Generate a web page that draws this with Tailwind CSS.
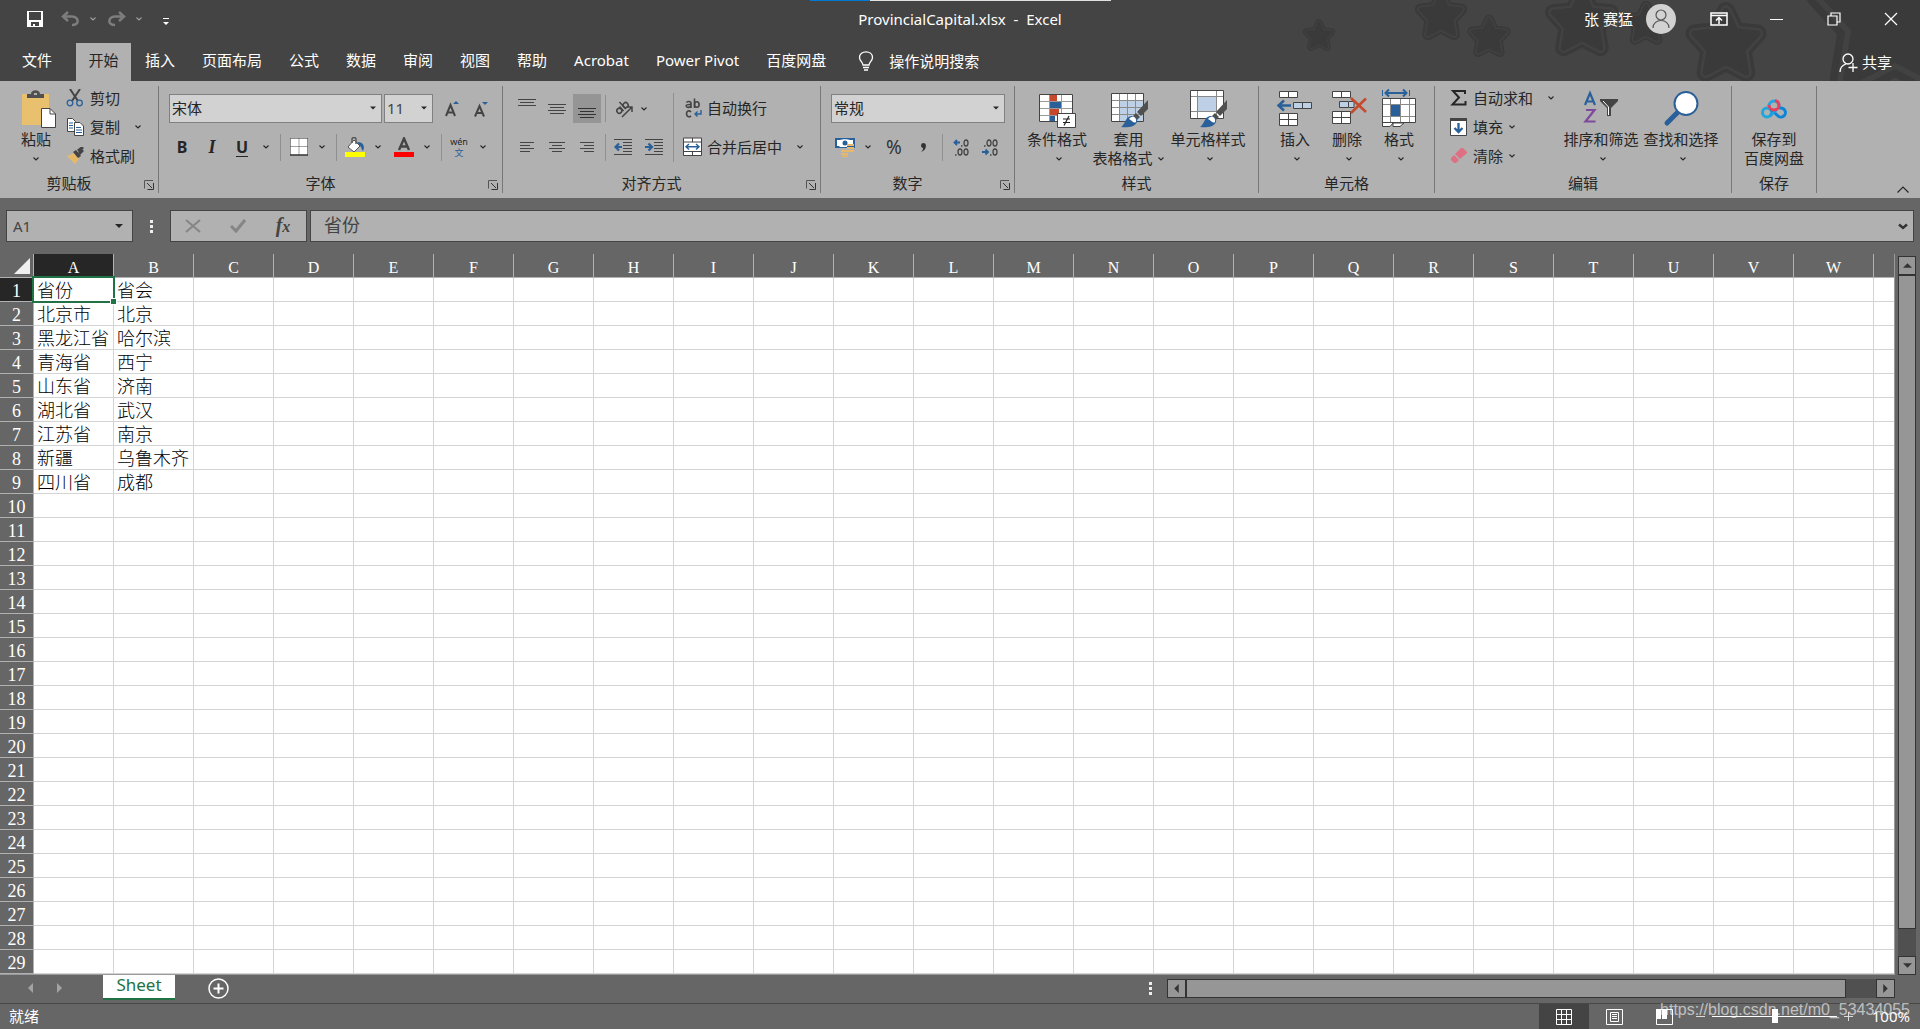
<!DOCTYPE html>
<html lang="zh-CN">
<head>
<meta charset="utf-8">
<title>ProvincialCapital.xlsx - Excel</title>
<script src="https://cdn.jsdelivr.net/npm/@tailwindcss/browser@4"></script>
</head>
<body class="flex min-h-screen flex-col overflow-hidden bg-[#666666] font-['Noto_Sans','Noto_Sans_CJK_SC',sans-serif] text-[15px] leading-5 text-[#262626]">

<svg class="hidden" xmlns="http://www.w3.org/2000/svg">
  <symbol id="chev" viewBox="0 0 8 6"><path d="M1.500 1.500L4 4L6.500 1.500" fill="none" stroke="currentColor" stroke-width="1.100"/></symbol>
  <symbol id="tri" viewBox="0 0 8 4"><path d="M0 0H8L4 4Z" fill="currentColor"/></symbol>
  <symbol id="launch" viewBox="0 0 10 10"><path d="M.5 8.500V.5H9" fill="none" stroke="#555"/><path d="M3 3L8 8M9.500 3V9.500H3.500" fill="none" stroke="#333"/></symbol>
  <symbol id="star" viewBox="-60 -60 120 120">
    <path d="M0 -44L13 -17L42 -14L22 8L27 38L0 24L-27 38L-22 8L-42 -14L-13 -17Z" fill="#3a3a3a" stroke="#3a3a3a" stroke-width="24" stroke-linejoin="round"/>
    <path d="M0 -44L13 -17L42 -14L22 8L27 38L0 24L-27 38L-22 8L-42 -14L-13 -17Z" fill="#3a3a3a" stroke="#424242" stroke-width="15" stroke-linejoin="round"/>
    <path d="M0 -44L13 -17L42 -14L22 8L27 38L0 24L-27 38L-22 8L-42 -14L-13 -17Z" fill="#3a3a3a" stroke="#3a3a3a" stroke-width="8" stroke-linejoin="round"/>
  </symbol>
  <symbol id="brush" viewBox="0 0 28 28">
    <path d="M27 0V9L20 16L16 12Z" fill="#505050"/><path d="M15 13L19 17L16 20L12 16Z" fill="#505050"/>
    <path d="M0 27C4 25 4 17 10 16C14 16 17 19 16 22C14 27 6 28 0 27Z" fill="#2a6099"/>
    <path d="M8 19C11 15 16 17 15 22C12 24 11 20 8 19Z" fill="#fff"/>
  </symbol>
</svg>

<header class="relative overflow-hidden bg-[#444444] text-white">
  <svg class="absolute top-0 right-0 h-[81px] w-[640px]" viewBox="0 0 640 81" aria-hidden="true">
    <use href="#star" x="21" y="18" width="36" height="36"/>
    <use href="#star" x="132" y="-13" width="58" height="58"/>
    <use href="#star" x="185" y="13" width="48" height="48"/>
    <use href="#star" x="261" y="-19" width="82" height="82"/>
    <use href="#star" x="341" y="-1" width="50" height="50"/>
    <use href="#star" x="401" y="-1" width="90" height="90"/>
    <use href="#star" x="515" y="-85" width="200" height="200"/>
  </svg>
  <div class="absolute inset-x-0 top-0 flex h-px justify-center"><span class="w-[60px] bg-[#0078d4]"></span><span class="w-[241px] bg-[#e1e1e1]"></span></div>

  <div class="relative flex h-[43px] items-start">
    <div class="flex h-[38px] flex-1 items-center text-[#a0a0a0]">
      <button class="ml-[23px] flex w-6 justify-center" aria-label="保存"><svg class="size-4" viewBox="0 0 16 16"><path d="M0 0H16V16H0Z" fill="#fff"/><path d="M2 1H14V9H2Z" fill="#444"/><path d="M4 11H12V15H4Z" fill="#444"/><path d="M6 13H8V16H6Z" fill="#fff"/></svg></button>
      <button class="ml-3.5 flex w-[18px] justify-center" aria-label="撤消"><svg class="h-4 w-[18px]" viewBox="0 0 18 16" fill="none" stroke="#7d7d7d" stroke-width="2.500"><path d="M7 1L2 5.500L7 10M2 5.500H11C18 6 19 14 11 14"/></svg></button>
      <button class="flex w-7 justify-center" aria-label="撤消选项"><svg class="h-1.5 w-2"><use href="#chev"/></svg></button>
      <button class="flex w-5 justify-center" aria-label="恢复"><svg class="h-4 w-[18px]" viewBox="0 0 18 16" fill="none" stroke="#7d7d7d" stroke-width="2.500"><path d="M11 1L16 5.500L11 10M16 5.500H7C0 6 -1 14 7 14"/></svg></button>
      <button class="flex w-6 justify-center" aria-label="恢复选项"><svg class="h-1.5 w-2"><use href="#chev"/></svg></button>
      <button class="ml-[3px] flex w-6 justify-center pt-1.5" aria-label="自定义快速访问工具栏"><svg class="h-2 w-1.5" viewBox="0 0 6 8"><path d="M0 .5H6" stroke="#fff"/><path d="M0 4H6L3 7Z" fill="#fff"/></svg></button>
    </div>
    <h1 class="pt-[9px] whitespace-pre">ProvincialCapital.xlsx  -  Excel</h1>
    <div class="flex h-[38px] flex-1 items-center justify-end">
      <span>张 赛猛</span>
      <button class="mr-[14px] ml-[13px] flex size-[30px] items-center justify-center rounded-full bg-[#d2d2d2]" aria-label="帐户"><svg class="size-5" viewBox="0 0 20 20" fill="none" stroke="#555" stroke-width="1.200"><circle cx="10" cy="6" r="5"/><path d="M2 19C2 9 18 9 18 19"/></svg></button>
      <button class="flex w-[58px] justify-center" aria-label="功能区显示选项"><svg class="h-[14px] w-[18px]" viewBox="0 0 18 14" fill="none" stroke="#fff"><path d="M1 1H17V13H1ZM1 3.500H17" stroke-width="1.500"/><path d="M9 12V6M6 8.500L9 5.500L12 8.500" stroke-width="1.500"/></svg></button>
      <button class="flex w-[57px] justify-center" aria-label="最小化"><svg class="h-[14px] w-[14px]" viewBox="0 0 14 14"><path d="M0 7.500H13" stroke="#fff"/></svg></button>
      <button class="flex w-[57px] justify-center" aria-label="向下还原"><svg class="size-[14px]" viewBox="0 0 14 14" fill="none" stroke="#fff" stroke-width="1.200"><path d="M1 4H10V13H1ZM4 4V1H13V10H10"/></svg></button>
      <button class="flex w-[58px] justify-center" aria-label="关闭"><svg class="size-[14px]" viewBox="0 0 14 14"><path d="M1 1L13 13M13 1L1 13" stroke="#fff" stroke-width="1.200"/></svg></button>
    </div>
  </div>

  <div class="relative flex h-[38px]">
    <nav class="flex items-stretch" aria-label="功能区选项卡">
      <button class="w-[76px] pr-0.5 pb-1">文件</button>
      <button class="w-[55px] bg-[#b1b1b1] pb-1 text-[#262626]">开始</button>
      <div class="flex gap-[27px] pb-1 pl-[14px]">
        <button>插入</button><button>页面布局</button><button>公式</button><button>数据</button><button>审阅</button><button>视图</button><button>帮助</button><button>Acrobat</button><button>Power Pivot</button><button>百度网盘</button>
      </div>
    </nav>
    <button class="ml-8 flex items-center gap-[15px] pb-0.5"><svg class="h-5 w-4" viewBox="0 0 16 20" fill="none" stroke="#fff" stroke-width="1.300"><path d="M5 14C5 11 1.500 10 1.500 6.500C1.500 -1 14.500 -1 14.500 6.500C14.500 10 11 11 11 14Z"/><path d="M5 16.500H11M6 19H10" stroke-width="1.600"/></svg>操作说明搜索</button>
    <button class="mr-[28px] ml-auto flex items-center gap-1"><svg class="size-[19px]" viewBox="0 0 19 19" fill="none" stroke="#fff" stroke-width="1.300"><circle cx="9" cy="6" r="5"/><path d="M1 19C1 15 4 12 7 11M14 10V19M9.500 14.500H18.500"/></svg>共享</button>
  </div>
</header>

<main class="flex flex-1 flex-col">
<section class="flex h-[117px] bg-[#b1b1b1] py-[5px] text-[15px]" aria-label="开始">

  <div class="flex w-[159px] shrink-0 flex-col border-r border-[#777]">
    <div class="flex h-[90px]">
      <button class="ml-[14px] flex w-11 flex-col items-center leading-[19px]">
        <span class="flex h-11 items-start pt-1"><svg class="h-[38px] w-10" viewBox="0 0 40 38"><path d="M6 4H33V35H6Z" fill="#e8c06e"/><path d="M11 8V4H15C15 -1 24 -1 24 4H28V8Z" fill="#505050"/><path d="M18 3H21V5H18Z" fill="#b1b1b1"/><path d="M25.500 18.500H34L39.500 24V37.500H25.500Z" fill="#fff" stroke="#444"/><path d="M34 18.500V24H39.500" fill="none" stroke="#444"/></svg></span>
        粘贴
        <span class="flex h-[19px] items-center"><svg class="h-1.5 w-2"><use href="#chev"/></svg></span>
      </button>
      <div class="ml-2 flex flex-col items-start gap-[5px]">
        <button class="flex h-6 items-center"><svg class="mr-1.5 h-[18px] w-[18px]" viewBox="0 0 18 18" fill="none"><path d="M4 0L12 12M14 0L6 12" stroke="#444" stroke-width="2"/><circle cx="4" cy="14" r="2.800" stroke="#2a6099" stroke-width="1.300"/><circle cx="13.500" cy="14" r="2.800" stroke="#2a6099" stroke-width="1.300"/></svg>剪切</button>
        <div class="flex h-6 items-center"><button class="flex items-center"><svg class="mr-1.5 h-[18px] w-[18px]" viewBox="0 0 18 18" fill="#fff" stroke="#444"><path d="M1.500 .5H6.500L9.500 3.500V13.500H1.500Z"/><path d="M3 5H7M3 7.500H7M3 10H7" stroke="#2a6099"/><path d="M8.500 4.500H14L17.500 8V17.500H8.500Z"/><path d="M10 9.500H15M10 12H16M10 14.500H16" stroke="#2a6099"/></svg>复制</button>
          <button class="ml-3 flex w-3 justify-center" aria-label="复制选项"><svg class="h-1.5 w-2"><use href="#chev"/></svg></button></div>
        <button class="flex h-6 items-center"><svg class="mr-1.5 h-[18px] w-[18px]" viewBox="0 0 18 18"><path d="M1 9L8 6L13 12L9 17Z" fill="#e8b86a"/><path d="M7 5L10 3L15 9L12 11Z" fill="#444"/><path d="M12 4L17 0M13 7L17 3" stroke="#444" stroke-width="3"/></svg>格式刷</button>
      </div>
    </div>
    <div class="flex flex-1 items-center pt-0.5"><span class="flex-1 text-center">剪贴板</span><button class="w-5 pt-1" aria-label="剪贴板设置"><svg class="ml-1.5 size-[10px]"><use href="#launch"/></svg></button></div>
  </div>

  <div class="flex w-[344px] shrink-0 flex-col border-r border-[#777]">
    <div class="flex h-[90px] flex-col pt-2">
      <div class="flex h-[29px] items-center pl-[10px]">
        <div class="relative"><select aria-label="字体" class="h-[29px] w-[213px] appearance-none border border-[#808080] bg-[#d2d2d2] pb-0.5 pl-0.5 outline-none"><option>宋体</option></select><svg class="pointer-events-none absolute top-3 right-1.5 h-1 w-1.5"><use href="#tri"/></svg></div>
        <div class="relative ml-0.5"><select aria-label="字号" class="h-[29px] w-[49px] appearance-none border border-[#808080] bg-[#d2d2d2] pb-0.5 pl-0.5 text-[#444] outline-none"><option>11</option></select><svg class="pointer-events-none absolute top-3 right-1.5 h-1 w-1.5"><use href="#tri"/></svg></div>
        <button class="ml-1 flex w-[29px] items-center justify-center" aria-label="增大字号"><svg class="h-4 w-[14px]" viewBox="0 0 14 16"><path d="M1 15L5.500 4L10 15M2.500 11.500H8.500" fill="none" stroke="#444" stroke-width="2"/><path d="M8 3H14L11 0Z" fill="#2a6099"/></svg></button>
        <button class="flex w-[29px] items-center justify-center" aria-label="减小字号"><svg class="h-4 w-[14px]" viewBox="0 0 14 16"><path d="M1 15.500L5.500 5L10 15.500M2.500 12H8.500" fill="none" stroke="#444" stroke-width="2"/><path d="M8 1H14L11 4Z" fill="#2a6099"/></svg></button>
      </div>
      <div class="mt-[10px] flex h-7 items-center pl-2">
        <button class="w-[30px] text-[16px] font-bold">B</button>
        <button class="w-[30px] font-['Liberation_Serif',serif] text-[18px] font-bold italic">I</button>
        <button class="w-[30px] text-[16px] font-bold underline underline-offset-3">U</button>
        <button class="flex w-[18px] justify-center" aria-label="下划线选项"><svg class="h-1.5 w-2"><use href="#chev"/></svg></button>
        <span class="flex w-[11px] justify-center"><i class="h-[27px] w-px bg-[#8f8f8f]"></i></span>
        <button class="flex w-[26px] justify-center" aria-label="边框"><svg class="size-[18px]" viewBox="0 0 18 18"><path d="M.5 .5H17.500V17H.5Z" fill="#fff"/><path d="M.5 .5H17.500M.5 8.500H17.500M.5 .5V17M9 .5V17M17.500 .5V17" stroke="#444" stroke-dasharray="1 1" fill="none"/><path d="M0 17H18" stroke="#333" stroke-width="1.500"/></svg></button>
        <button class="flex w-5 justify-center" aria-label="边框选项"><svg class="h-1.5 w-2"><use href="#chev"/></svg></button>
        <span class="flex w-[9px] justify-center"><i class="h-[27px] w-px bg-[#8f8f8f]"></i></span>
        <button class="flex w-7 justify-center" aria-label="填充颜色"><svg class="h-5 w-5" viewBox="0 0 20 20"><path d="M12 5C19 5 20 10 18 14C16 12 17 10 14 8Z" fill="#2a6099"/><path d="M9 3L15 9L9 15L3 10Z" fill="#fff" stroke="#555"/><path d="M7 6V2C7 0 11 0 11 2V7" fill="none" stroke="#555" stroke-width="1.400"/><path d="M0 15H20V20H0Z" fill="#ff0"/></svg></button>
        <button class="flex w-[18px] justify-center" aria-label="填充颜色选项"><svg class="h-1.5 w-2"><use href="#chev"/></svg></button>
        <button class="flex w-[34px] justify-center" aria-label="字体颜色"><svg class="h-5 w-5" viewBox="0 0 20 20"><path d="M5 13L10 1.500L15 13M7 9.500H13" fill="none" stroke="#444" stroke-width="2.400"/><path d="M0 15H20V20H0Z" fill="#f00"/></svg></button>
        <button class="flex w-3 justify-center" aria-label="字体颜色选项"><svg class="h-1.5 w-2"><use href="#chev"/></svg></button>
        <span class="flex w-4 justify-center"><i class="h-[27px] w-px bg-[#8f8f8f]"></i></span>
        <button class="flex w-5 flex-col items-center text-[9px] leading-[11px]"><span>wén</span><span class="text-[#2a6099]">文</span></button>
        <button class="flex w-7 justify-center" aria-label="拼音选项"><svg class="h-1.5 w-2"><use href="#chev"/></svg></button>
      </div>
    </div>
    <div class="flex flex-1 items-center pt-0.5"><span class="flex-1 text-center">字体</span><button class="w-5 pt-1" aria-label="字体设置"><svg class="ml-1.5 size-[10px]"><use href="#launch"/></svg></button></div>
  </div>

  <div class="flex w-[318px] shrink-0 flex-col border-r border-[#777]">
    <div class="flex h-[90px] items-start">
      <div class="w-[170px] pt-2 pl-[10px]">
        <div class="flex h-[29px] items-center gap-0.5">
          <button class="flex h-[29px] w-7 justify-center pt-1" aria-label="顶端对齐"><svg class="h-3 w-[18px]" viewBox="0 0 18 12"><path d="M0 1.500H18M2 4.500H16M0 7.500H18" stroke="#444"/></svg></button>
          <button class="flex h-[29px] w-7 items-center justify-center" aria-label="垂直居中"><svg class="h-3 w-[18px]" viewBox="0 0 18 12"><path d="M0 1.500H18M2 4.500H16M0 7.500H18M2 10.500H16" stroke="#444"/></svg></button>
          <button class="flex h-[29px] w-7 items-end justify-center bg-[#959595] pb-1" aria-label="底端对齐"><svg class="h-3 w-[18px]" viewBox="0 0 18 12"><path d="M0 1.500H18M2 4.500H16M0 7.500H18M2 10.500H16" stroke="#333"/></svg></button>
          <span class="flex w-1 justify-center"><i class="h-[27px] w-px bg-[#8f8f8f]"></i></span>
          <button class="flex w-7 justify-center" aria-label="方向"><svg class="size-[19px]" viewBox="0 0 19 19" fill="none" stroke="#444" stroke-width="1.500"><g transform="rotate(-42 8 8)"><circle cx="3.500" cy="9" r="2.500"/><path d="M6.500 6V12M9.500 2.500V12"/><circle cx="12" cy="9" r="2.500"/></g><path d="M8 18L17.500 8.500M13 8H18V13"/></svg></button>
          <button class="flex w-2.5 justify-center" aria-label="方向选项"><svg class="h-1.5 w-2"><use href="#chev"/></svg></button>
        </div>
        <div class="mt-[10px] flex h-7 items-center gap-0.5">
          <button class="flex w-7 justify-center" aria-label="左对齐"><svg class="h-3 w-[14px]" viewBox="0 0 14 12"><path d="M0 1.500H14M0 4.500H10M0 7.500H14M0 10.500H10" stroke="#444"/></svg></button>
          <button class="flex w-7 justify-center" aria-label="居中"><svg class="h-3 w-4" viewBox="0 0 16 12"><path d="M0 1.500H16M3 4.500H13M0 7.500H16M3 10.500H13" stroke="#444"/></svg></button>
          <button class="flex w-7 justify-center" aria-label="右对齐"><svg class="h-3 w-[14px]" viewBox="0 0 14 12"><path d="M0 1.500H14M4 4.500H14M0 7.500H14M4 10.500H14" stroke="#444"/></svg></button>
          <span class="flex w-1 justify-center"><i class="h-[27px] w-px bg-[#8f8f8f]"></i></span>
          <button class="flex w-7 justify-center" aria-label="减少缩进"><svg class="h-4 w-[18px]" viewBox="0 0 18 16"><path d="M0 .5H18M9 3.500H18M9 6.500H18M9 9.500H18M9 12.500H18M0 15.500H18" stroke="#444"/><path d="M8 8H2M5 4.500L1.500 8L5 11.500" fill="none" stroke="#2a6099" stroke-width="2.200"/></svg></button>
          <button class="flex w-[30px] justify-center" aria-label="增加缩进"><svg class="h-4 w-[18px]" viewBox="0 0 18 16"><path d="M0 .5H18M9 3.500H18M9 6.500H18M9 9.500H18M9 12.500H18M0 15.500H18" stroke="#444"/><path d="M0 8H6M3.500 4.500L7 8L3.500 11.500" fill="none" stroke="#2a6099" stroke-width="2.200"/></svg></button>
        </div>
      </div>
      <i class="mt-[7px] h-[69px] w-px bg-[#8f8f8f]"></i>
      <div class="pt-2 pl-[9px]">
        <button class="flex h-[29px] items-center pb-0.5"><svg class="mr-1 h-5 w-5" viewBox="0 0 20 20" fill="none" stroke="#444" stroke-width="1.600"><path d="M3.500 4.500C4 3 8 3 8 5V10M8 6.500C4 6.200 2.800 7.200 3.200 8.200C4 10 7 9.500 8 8"/><path d="M11.500 .5V10"/><ellipse cx="13.800" cy="6.500" rx="2.300" ry="2.800"/><path d="M8 14C6 12 3.500 13 3.500 15.800C3.500 18.500 6 19.500 8 18"/><path d="M18 12V16H12M14.500 13.500L12 16L14.500 18.500" stroke="#2a6099" stroke-width="1.400"/></svg>自动换行</button>
        <div class="mt-[10px] flex h-7 items-center"><button class="flex items-center"><svg class="mr-1 h-5 w-5" viewBox="0 0 20 20"><path d="M.5 1H18.500V18.500H.5Z" fill="#fff" stroke="#444"/><path d="M.5 5H18.500M.5 14.500H18.500M9.500 1V5M9.500 14.500V18.500" stroke="#444"/><path d="M3 9.700H16M6 7L3 9.700L6 12.500M13 7L16 9.700L13 12.500" fill="none" stroke="#2a6099" stroke-width="1.400"/></svg>合并后居中</button>
          <button class="ml-2 flex w-5 justify-center" aria-label="合并选项"><svg class="h-1.5 w-2"><use href="#chev"/></svg></button></div>
      </div>
    </div>
    <div class="flex flex-1 items-center pt-0.5"><span class="flex-1 text-center">对齐方式</span><button class="w-5 pt-1" aria-label="对齐设置"><svg class="ml-1.5 size-[10px]"><use href="#launch"/></svg></button></div>
  </div>

  <div class="flex w-[194px] shrink-0 flex-col border-r border-[#777]">
    <div class="h-[90px] pt-2 pl-[10px]">
      <div class="relative w-[174px]"><select aria-label="数字格式" class="h-[29px] w-[174px] appearance-none border border-[#808080] bg-[#d2d2d2] pb-0.5 pl-0.5 outline-none"><option>常规</option></select><svg class="pointer-events-none absolute top-3 right-1.5 h-1 w-1.5"><use href="#tri"/></svg></div>
      <div class="mt-[10px] flex h-7 items-center">
        <button class="flex w-7 justify-center" aria-label="会计数字格式"><svg class="size-5" viewBox="0 0 20 20"><path d="M0 1H20V11H0Z" fill="#2a6099"/><path d="M2 3H5C7 2 13 2 15 3H18V7H12V10H5L4 9H2Z" fill="#fff"/><circle cx="10" cy="6" r="2.500" fill="#2a6099"/><path d="M12 8H19M12 11H19M13 14H19M6 14H13M6 17H13M7 19.500H13" stroke="#e8b86a" stroke-width="2"/></svg></button>
        <button class="flex w-[18px] justify-center" aria-label="会计格式选项"><svg class="h-1.5 w-2"><use href="#chev"/></svg></button>
        <button class="w-[34px] text-[19px] text-[#333]">%</button>
        <button class="flex w-6 justify-center" aria-label="千位分隔样式"><svg class="h-[9px] w-1.5" viewBox="0 0 6 9"><path d="M1 9C3 7 3 6 3 5A2.500 2.500 0 1 1 6 2.500C6 6 4 8 1 9Z" fill="#333"/></svg></button>
        <span class="flex w-[14px] justify-center"><i class="h-[27px] w-px bg-[#8f8f8f]"></i></span>
        <button class="flex w-6 justify-center" aria-label="增加小数位数"><svg class="h-[18px] w-4" viewBox="0 0 16 18" fill="none" stroke="#444" stroke-width="1.300"><path d="M8 8H9.500M2 17H3.500"/><ellipse cx="13" cy="5" rx="2" ry="3"/><ellipse cx="7" cy="14" rx="2" ry="3"/><ellipse cx="13" cy="14" rx="2" ry="3"/><path d="M7 4.500H1.500M4 2L1.500 4.500L4 7" stroke="#2a6099" stroke-width="1.800"/></svg></button>
        <button class="flex w-[34px] justify-center" aria-label="减少小数位数"><svg class="h-[18px] w-4" viewBox="0 0 16 18" fill="none" stroke="#444" stroke-width="1.300"><path d="M2 8H3.500M8 17H9.500"/><ellipse cx="7" cy="5" rx="2" ry="3"/><ellipse cx="13" cy="5" rx="2" ry="3"/><ellipse cx="13" cy="14" rx="2" ry="3"/><path d="M0 14H5.500M3.500 11.500L6 14L3.500 16.500" stroke="#2a6099" stroke-width="1.800"/></svg></button>
      </div>
    </div>
    <div class="flex flex-1 items-center pt-0.5"><span class="flex-1 text-center">数字</span><button class="w-5 pt-1" aria-label="数字设置"><svg class="ml-1.5 size-[10px]"><use href="#launch"/></svg></button></div>
  </div>

  <div class="flex w-[244px] shrink-0 flex-col border-r border-[#777]">
    <div class="flex h-[90px] pl-2 leading-[19px]">
      <button class="flex w-[68px] flex-col items-center">
        <span class="flex h-11 items-center"><svg class="size-10" viewBox="0 0 40 40"><path d="M2.500 6.500H35.500V33.500H2.500Z" fill="#fff"/><path d="M13 7H20V13H13Z" fill="#c5492a"/><path d="M13 14H24V20H13Z" fill="#2a6099"/><path d="M13 21H22V27H13Z" fill="#c5492a"/><path d="M13 28H18V33H13Z" fill="#2a6099"/><path d="M2.500 13.500H35M2.500 20.500H35M2.500 27.500H35M12.500 6V33M24.500 6V33" stroke="#999"/><path d="M2.500 6.500H35.500V33.500H2.500Z" fill="none" stroke="#444"/><path d="M20.500 25.500H38.500V39.500H20.500Z" fill="#fff" stroke="#444"/><path d="M26 31H33M26 34.500H33M32 28L27 37.500" stroke="#222" stroke-width="1.200"/></svg></span>
        条件格式
        <span class="flex h-[19px] items-center pl-1"><svg class="h-1.5 w-2"><use href="#chev"/></svg></span>
      </button>
      <button class="flex w-[75px] flex-col items-center">
        <span class="flex h-11 items-center"><svg class="size-10" viewBox="0 0 40 40"><path d="M2.500 5.500H34.500V33.500H2.500Z" fill="#fff"/><path d="M11 13H34V33H11Z" fill="#bdd0e6"/><path d="M2.500 12.500H34M2.500 19.500H34M2.500 26.500H34M10.500 6V33M18.500 6V33M26.500 6V33" stroke="#8a8a8a"/><path d="M2.500 5.500H34.500V33.500H2.500Z" fill="none" stroke="#444"/><use href="#brush" x="12" y="12" width="28" height="28"/></svg></span>
        套用
        <span class="flex items-center gap-1 whitespace-nowrap">表格格式<svg class="h-1.5 w-2"><use href="#chev"/></svg></span>
      </button>
      <button class="flex w-[84px] flex-col items-center">
        <span class="flex h-11 items-center"><svg class="size-10" viewBox="0 0 40 40"><path d="M2.500 2.500H35.500V30.500H2.500Z" fill="#fff"/><path d="M2.500 8.500H35M2.500 23.500H35M9.500 3V30M28.500 3V30" stroke="#8a8a8a"/><path d="M10 9H28V23H10Z" fill="#bdd0e6"/><path d="M2.500 2.500H35.500V30.500H2.500Z" fill="none" stroke="#444"/><use href="#brush" x="12" y="12" width="28" height="28"/></svg></span>
        单元格样式
        <span class="flex h-[19px] items-center pl-1"><svg class="h-1.5 w-2"><use href="#chev"/></svg></span>
      </button>
    </div>
    <div class="flex flex-1 items-center justify-center pt-0.5">样式</div>
  </div>

  <div class="flex w-[176px] shrink-0 flex-col border-r border-[#777]">
    <div class="flex h-[90px] pl-3 leading-[19px]">
      <button class="flex w-12 flex-col items-center">
        <span class="flex h-11 items-center"><svg class="h-10 w-10" viewBox="0 0 40 40" fill="#fff" stroke="#444"><path d="M4.500 3.500H22.500V9.500H4.500ZM13.500 3.500V9.500"/><path d="M18.500 14.500H36.500V20.500H18.500ZM27.500 14.500V20.500" fill="#bdd0e6"/><path d="M4.500 25.500H22.500V37.500H4.500ZM13.500 25.500V37.500M4.500 31.500H22.500"/><path d="M16 17.500H4M9 12.500L3.500 17.500L9 22.500" fill="none" stroke="#2a6099" stroke-width="2.500"/></svg></span>
        插入
        <span class="flex h-[19px] items-center pl-1"><svg class="h-1.5 w-2"><use href="#chev"/></svg></span>
      </button>
      <button class="flex w-[56px] flex-col items-center">
        <span class="flex h-11 items-center pl-1"><svg class="h-10 w-10" viewBox="0 0 40 40" fill="#fff" stroke="#444"><path d="M3.500 3.500H21.500V9.500H3.500ZM12.500 3.500V9.500"/><path d="M10.500 13.500H19.500V19.500H10.500Z" fill="#bdd0e6"/><path d="M20 13.500H25V19.500H20" fill="#bdd0e6"/><path d="M3.500 23.500H21.500V35.500H3.500ZM12.500 23.500V35.500M3.500 29.500H21.500"/><path d="M22 10L37 24M37 10.500L22 25" fill="none" stroke="#c5492a" stroke-width="2.500"/></svg></span>
        删除
        <span class="flex h-[19px] items-center pl-1"><svg class="h-1.5 w-2"><use href="#chev"/></svg></span>
      </button>
      <button class="flex w-12 flex-col items-center">
        <span class="flex h-11 items-center"><svg class="h-10 w-10" viewBox="0 0 40 40"><path d="M3.500 2V8M30.500 2V8" stroke="#2a6099"/><path d="M6 5H28M10 1.500L6.500 5L10 8.500M24 1.500L27.500 5L24 8.500" fill="none" stroke="#2a6099" stroke-width="2"/><path d="M3.500 10.500H36.500V34.500H3.500Z" fill="#fff"/><path d="M3.500 16.500H36M3.500 28.500H36M11.500 11V34M21.500 11V34M30.500 11V34" stroke="#8a8a8a"/><path d="M12 17H21V28H12Z" fill="#2a6099"/><path d="M3.500 34V38.500H11L14 35H25L21 38.500H14L14 35" fill="#fff" stroke="#444"/><path d="M3.500 10.500H36.500V34.500H3.500Z" fill="none" stroke="#444"/></svg></span>
        格式
        <span class="flex h-[19px] items-center pl-1"><svg class="h-1.5 w-2"><use href="#chev"/></svg></span>
      </button>
    </div>
    <div class="flex flex-1 items-center justify-center pt-0.5">单元格</div>
  </div>

  <div class="flex w-[297px] shrink-0 flex-col border-r border-[#777]">
    <div class="flex h-[90px] pl-[13px] leading-[19px]">
      <div class="flex w-[113px] flex-col gap-[5px]">
        <div class="flex h-6 items-center"><button class="flex items-center gap-[5px]"><svg class="size-5" viewBox="0 0 20 20"><path d="M17 6V3H5L11 9.500L4.500 16.500H17.500V13" fill="none" stroke="#262626" stroke-width="2"/></svg>自动求和</button><button class="ml-3 flex w-3 justify-center" aria-label="求和选项"><svg class="h-1.5 w-2"><use href="#chev"/></svg></button></div>
        <button class="flex h-6 items-center gap-[5px]"><svg class="size-5" viewBox="0 0 20 20"><path d="M2.500 2H18.500V18.500H2.500Z" fill="#fff" stroke="#444"/><path d="M2 1H19V4H2Z" fill="#444"/><path d="M10.500 6V15M6.500 11L10.500 15L14.500 11" fill="none" stroke="#2a6099" stroke-width="2.300"/></svg>填充<svg class="h-1.5 w-2"><use href="#chev"/></svg></button>
        <button class="flex h-6 items-center gap-[5px]"><svg class="size-5" viewBox="0 0 20 20"><path d="M13 2H15L19 6V7L12 13L7 8Z" fill="#dd7083"/><path d="M6 9L11 14L8 17H6L3 14V12Z" fill="#dd7083"/></svg>清除<svg class="h-1.5 w-2"><use href="#chev"/></svg></button>
      </div>
      <button class="flex w-20 flex-col items-center">
        <span class="flex h-11 items-center"><svg class="h-10 w-10" viewBox="0 0 40 40"><path d="M4 17L9 5L14 17M6 13.500H12" fill="none" stroke="#2a6099" stroke-width="2.200"/><path d="M5 22H13.500L4.500 33.500H14.500" fill="none" stroke="#7e4a9e" stroke-width="2.200"/><path d="M19 11H37V13L30 20V28H26V20L19 13Z" fill="#444"/><path d="M22 13L27.500 19V27" stroke="#fff" fill="none"/></svg></span>
        排序和筛选
        <span class="flex h-[19px] items-center pl-1"><svg class="h-1.5 w-2"><use href="#chev"/></svg></span>
      </button>
      <button class="flex w-20 flex-col items-center">
        <span class="flex h-11 items-center"><svg class="h-10 w-10" viewBox="0 0 40 40"><path d="M17 24L6 35" stroke="#2a6099" stroke-width="5" stroke-linecap="round"/><circle cx="25" cy="15.500" r="11.500" fill="#fff" stroke="#2a6099" stroke-width="2"/></svg></span>
        查找和选择
        <span class="flex h-[19px] items-center pl-1"><svg class="h-1.5 w-2"><use href="#chev"/></svg></span>
      </button>
    </div>
    <div class="flex flex-1 items-center justify-center pt-0.5">编辑</div>
  </div>

  <div class="flex w-[85px] shrink-0 flex-col border-r border-[#777]">
    <button class="flex h-[90px] flex-col items-center leading-[19px]">
      <span class="flex h-11 items-center"><svg class="h-[21px] w-[26px]" viewBox="0 0 26 21" fill="none" stroke-width="3"><circle cx="6" cy="14.500" r="4.500" stroke="#1fa8dc"/><path d="M18 10.500A4.500 4.500 0 1 1 16.500 17.500L9.500 11" stroke="#0a86d8"/><path d="M8 8A5 5 0 1 1 18 8" stroke="#22a5e0"/><path d="M9 18L16 11" stroke="#1f9fe0"/><path d="M8 7A5 5 0 1 0 18 7A5 5 0 0 0 14 2.500" stroke="#e5405e"/></svg></span>
      <span>保存到</span><span>百度网盘</span>
    </button>
    <div class="flex flex-1 items-center justify-center pt-0.5">保存</div>
  </div>
  <div class="flex flex-1 items-end justify-end pr-[11px]"><button aria-label="折叠功能区"><svg class="h-[7px] w-3" viewBox="0 0 12 7"><path d="M.5 6.500L6 1L11.500 6.500" fill="none" stroke="#262626" stroke-width="1.200"/></svg></button></div>
</section>

<section class="flex py-3 pr-1.5 pl-1.5" aria-label="编辑栏">
  <div class="flex h-8 w-[127px] items-center border border-[#444] bg-[#b1b1b1]">
    <input aria-label="名称框" value="A1" class="w-full min-w-0 bg-transparent pl-1.5 text-[#444] outline-none"><button class="flex w-[26px] shrink-0 justify-center" aria-label="名称列表"><svg class="h-1 w-2"><use href="#tri"/></svg></button>
  </div>
  <div class="flex w-[37px] flex-col items-center justify-center gap-0.5"><i class="size-[3px] bg-[#eee]"></i><i class="size-[3px] bg-[#eee]"></i><i class="size-[3px] bg-[#eee]"></i></div>
  <div class="flex h-8 w-[137px] items-center border border-[#444] bg-[#b1b1b1]">
    <button class="flex w-[44px] justify-center" aria-label="取消"><svg class="h-[14px] w-4" viewBox="0 0 16 14"><path d="M1 1L15 13M15 1L1 13" stroke="#858585" stroke-width="2"/></svg></button>
    <button class="flex w-[46px] justify-center" aria-label="输入"><svg class="h-[14px] w-4" viewBox="0 0 16 14"><path d="M1 7L6 12L15 1" fill="none" stroke="#858585" stroke-width="3"/></svg></button>
    <button class="w-[44px] font-['Liberation_Serif',serif] text-[20px] font-bold text-[#444] italic">f<span class="text-[16px]">x</span></button>
  </div>
  <div class="ml-[3px] flex h-8 flex-1 items-center border border-[#444] bg-[#b1b1b1]">
    <input aria-label="编辑栏内容" value="省份" class="h-[30px] min-w-0 flex-1 bg-transparent pb-1 pl-[13px] text-[18px] text-[#444] outline-none"><button class="flex w-5 justify-center" aria-label="展开编辑栏"><svg class="h-[7px] w-[10px]" viewBox="0 0 10 7"><path d="M1 1.500L5 5L9 1.500" fill="none" stroke="#333" stroke-width="2.400"/></svg></button>
  </div>
</section>

<section class="flex" aria-label="工作表">
  <div class="min-w-0 flex-1 overflow-hidden border-r border-b border-[#9a9a9a]">
    <table class="w-full table-fixed border-separate border-spacing-0">
      <thead><tr id="columns"><th class="h-6 w-[34px] border-r border-b border-[#b1b1b1] p-0"><svg class="ml-[14px] size-4" viewBox="0 0 16 16"><path d="M16 0V16H0Z" fill="#f0f0f0"/></svg></th></tr></thead>
      <tbody id="rows" class="bg-white"></tbody>
    </table>
  </div>
  <div class="flex w-[25px] flex-col pt-0.5 pr-1 pl-[3px]">
    <button class="flex h-[19px] items-center justify-center border border-[#333] bg-[#969696] text-[#333]" aria-label="向上滚动"><svg class="h-[5px] w-[9px]" viewBox="0 0 8 4"><path d="M0 4H8L4 0Z" fill="currentColor"/></svg></button>
    <div class="flex flex-1 flex-col bg-[#505050]"><div class="h-[96%] border border-[#333] bg-[#969696]"></div></div>
    <button class="flex h-[19px] items-center justify-center border border-[#333] bg-[#969696] text-[#333]" aria-label="向下滚动"><svg class="h-[5px] w-[9px]"><use href="#tri"/></svg></button>
  </div>
</section>

<section class="flex h-7 items-start" aria-label="工作表标签">
  <button class="mt-2 ml-7 w-[5px]" aria-label="上一个工作表"><svg class="h-[10px] w-[5px]" viewBox="0 0 5 10"><path d="M5 0V10L0 5Z" fill="#a3a3a3"/></svg></button>
  <button class="mt-2 ml-6 w-[5px]" aria-label="下一个工作表"><svg class="h-[10px] w-[5px]" viewBox="0 0 5 10"><path d="M0 0V10L5 5Z" fill="#a3a3a3"/></svg></button>
  <button class="ml-[41px] h-[25px] w-[72px] border-b-2 border-[#217346] bg-white pb-1 text-[17px] text-[#217346]">Sheet</button>
  <button class="mt-[3px] ml-[33px]" aria-label="新工作表"><svg class="size-[21px]" viewBox="0 0 21 21" fill="none" stroke="#fff"><circle cx="10.500" cy="10.500" r="9.500" stroke-width="1.500"/><path d="M10.500 5.500V15.500M5.500 10.500H15.500" stroke-width="2"/></svg></button>
  <div class="mt-[7px] ml-auto flex flex-col gap-0.5"><i class="size-[3px] bg-[#eee]"></i><i class="size-[3px] bg-[#eee]"></i><i class="size-[3px] bg-[#eee]"></i></div>
  <div class="mt-1 mr-[25px] ml-[15px] flex h-[19px] w-[728px] bg-[#505050]">
    <button class="flex w-[19px] items-center justify-center border border-[#333] bg-[#969696]" aria-label="向左滚动"><svg class="h-[9px] w-[5px]" viewBox="0 0 5 10"><path d="M5 0V10L0 5Z" fill="#333"/></svg></button>
    <div class="flex-1"><div class="h-full w-[660px] border border-[#333] bg-[#969696]"></div></div>
    <button class="flex w-[19px] items-center justify-center border border-[#333] bg-[#969696]" aria-label="向右滚动"><svg class="h-[9px] w-[5px]" viewBox="0 0 5 10"><path d="M0 0V10L5 5Z" fill="#333"/></svg></button>
  </div>
</section>
</main>

<footer class="relative flex h-[26px] items-stretch border-t border-[#484848] text-white">
  <span class="flex flex-1 items-center pb-0.5 pl-[9px]">就绪</span>
  <button class="flex w-[50px] items-center justify-center bg-[#444]" aria-label="普通"><svg class="size-4" viewBox="0 0 16 16"><path d="M.5 .5H15.500V15.500H.5ZM5.500 0V16M10.500 0V16M0 5.500H16M0 10.500H16" fill="none" stroke="#fff"/></svg></button>
  <button class="flex w-[50px] items-center justify-center" aria-label="页面布局视图"><svg class="h-4 w-[17px]" viewBox="0 0 17 16" fill="none" stroke="#fff"><path d="M.5 .5H16.500V15.500H.5ZM4.500 3.500H12.500V12.500H4.500ZM6 5.500H11M6 7.500H11M6 9.500H11"/></svg></button>
  <button class="flex w-[50px] items-center justify-center" aria-label="分页预览"><svg class="h-4 w-[17px]" viewBox="0 0 17 16"><path d="M.5 .5H16.500V15.500H.5Z" fill="none" stroke="#fff"/><path d="M0 0H5V10H0ZM6 0H11V10H6Z" fill="#fff"/></svg></button>
  <div class="flex items-center gap-[7px] pl-[7px]">
    <button aria-label="缩小"><svg class="size-[9px]" viewBox="0 0 9 9"><path d="M0 4.500H9" stroke="#ddd"/></svg></button>
    <input type="range" min="0" max="100" value="50" aria-label="显示比例" class="h-4 w-[125px] appearance-none bg-transparent [&::-webkit-slider-runnable-track]:h-px [&::-webkit-slider-runnable-track]:bg-white [&::-webkit-slider-thumb]:-mt-[7px] [&::-webkit-slider-thumb]:h-[14px] [&::-webkit-slider-thumb]:w-1.5 [&::-webkit-slider-thumb]:appearance-none [&::-webkit-slider-thumb]:bg-white">
    <button aria-label="放大"><svg class="size-[9px]" viewBox="0 0 9 9"><path d="M0 4.500H9M4.500 0V9" stroke="#ddd"/></svg></button>
  </div>
  <button class="w-[67px] pr-[10px] pb-0.5 text-right">100%</button>
  <span class="pointer-events-none absolute -top-1 right-[10px] font-['Liberation_Sans',sans-serif] text-[16px] leading-5 text-white/60">https://blog.csdn.net/m0_53434055</span>
</footer>

<script>
  const data = [["省份","省会"],["北京市","北京"],["黑龙江省","哈尔滨"],["青海省","西宁"],["山东省","济南"],["湖北省","武汉"],["江苏省","南京"],["新疆","乌鲁木齐"],["四川省","成都"]];
  const letters = "ABCDEFGHIJKLMNOPQRSTUVW".split("");
  const serif = "font-['Liberation_Serif','Noto_Sans_CJK_SC',serif] font-normal text-white";

  // Column headings; the unlabelled last column takes the leftover width
  document.getElementById("columns").insertAdjacentHTML("beforeend",
    letters.map((l, i) => `<th scope="col" class="h-6 w-20 border-r border-b border-[#b1b1b1] p-0 pt-1 text-[16px] leading-4 ${serif} ${i ? "" : "bg-[#262626]"}">${l}</th>`).join("") +
    `<th class="border-b border-[#b1b1b1] p-0"></th>`);

  let html = "";
  for (let r = 0; r < 29; r++) {
    html += `<tr><th scope="row" class="h-6 border-r border-b border-[#b1b1b1] p-0 pt-0.5 text-[18px] leading-5 ${serif} ${r ? "bg-[#666666]" : "bg-[#262626]"}">${r + 1}</th>`;
    for (let c = 0; c <= letters.length; c++) {
      const text = data[r] && data[r][c] || "";
      const edge = c < letters.length ? "border-r" : "";
      const picked = r === 0 && c === 0
        ? `<span class="absolute -inset-0.5 z-10 border-2 border-[#217346]"></span><span class="absolute -right-[3px] -bottom-[3px] z-10 size-[5px] bg-[#217346] outline outline-white"></span>` : "";
      html += `<td class="relative h-6 ${edge} border-b border-[#d4d4d4] p-0 pl-[3px] text-[18px] leading-[22px] font-light whitespace-nowrap text-black">${text}${picked}</td>`;
    }
    html += "</tr>";
  }
  document.getElementById("rows").innerHTML = html;
</script>
</body>
</html>
